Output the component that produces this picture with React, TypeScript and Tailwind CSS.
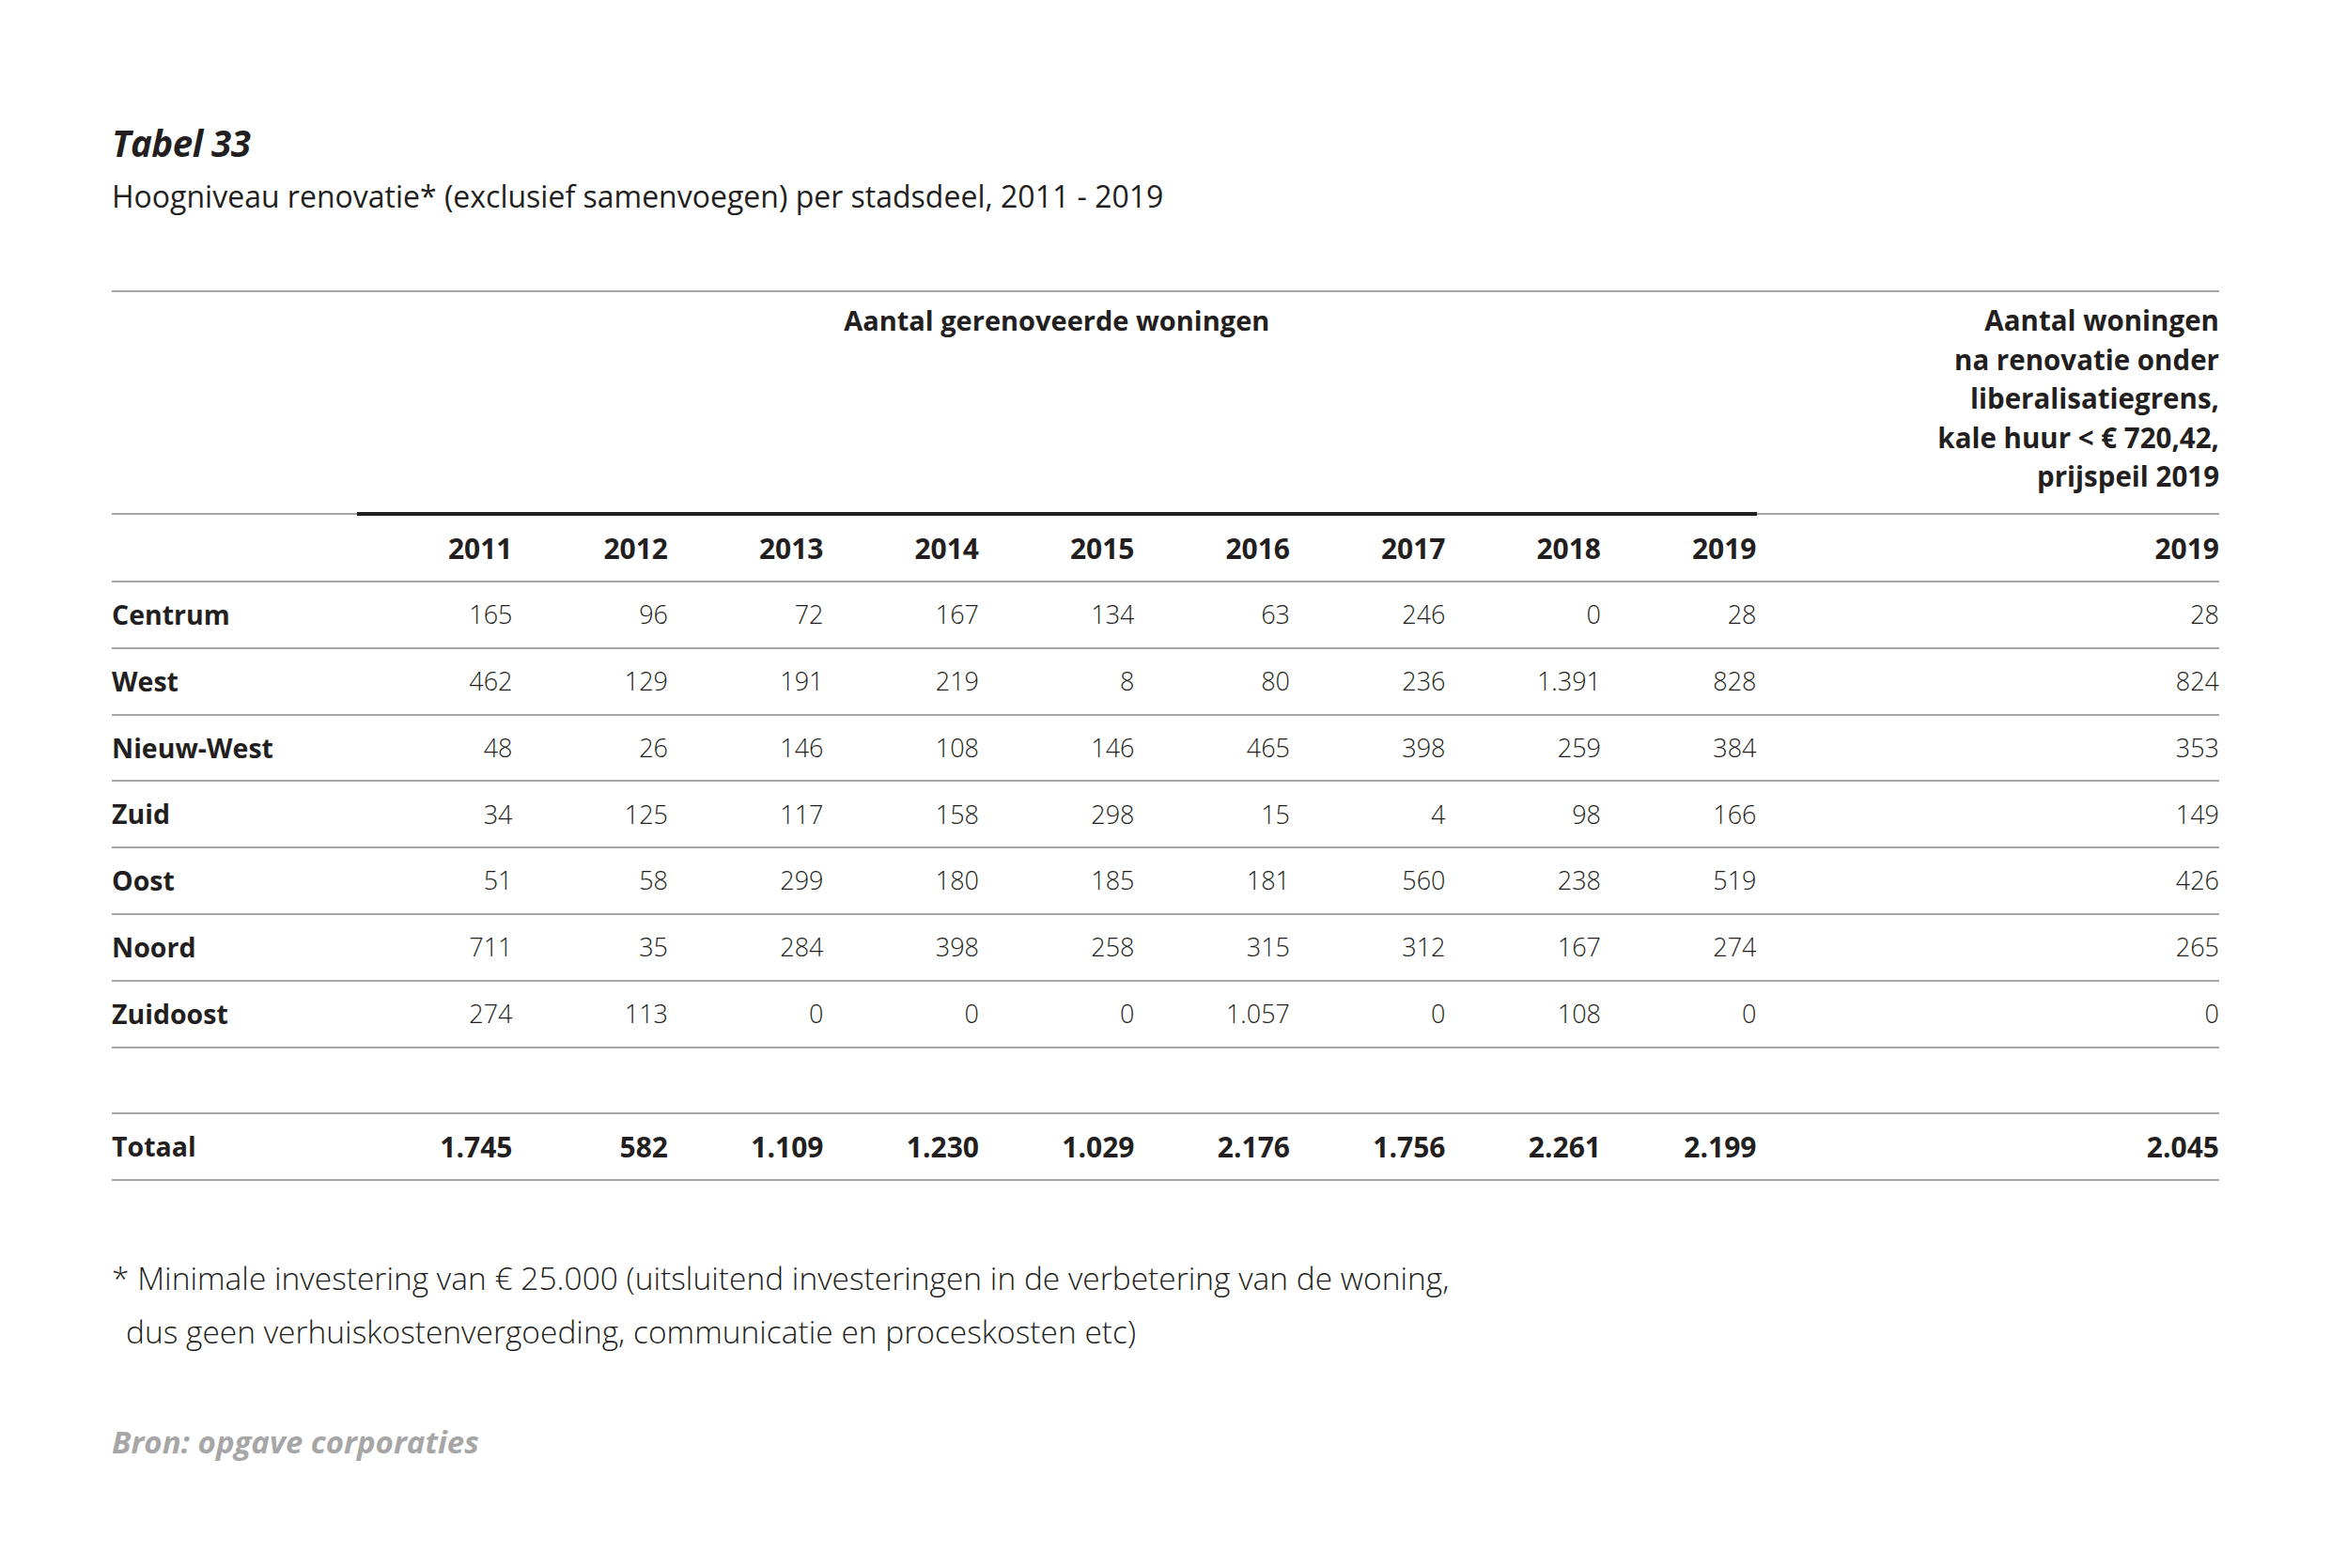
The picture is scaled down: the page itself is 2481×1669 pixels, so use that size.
/**
 * Tabel 33 — Hoogniveau renovatie per stadsdeel
 */

const JAREN = ["2011", "2012", "2013", "2014", "2015", "2016", "2017", "2018", "2019"];

interface Rij {
  naam: string;
  waarden: string[];
  onderGrens: string;
}

const RIJEN: Rij[] = [
  { naam: "Centrum", waarden: ["165", "96", "72", "167", "134", "63", "246", "0", "28"], onderGrens: "28" },
  { naam: "West", waarden: ["462", "129", "191", "219", "8", "80", "236", "1.391", "828"], onderGrens: "824" },
  { naam: "Nieuw-West", waarden: ["48", "26", "146", "108", "146", "465", "398", "259", "384"], onderGrens: "353" },
  { naam: "Zuid", waarden: ["34", "125", "117", "158", "298", "15", "4", "98", "166"], onderGrens: "149" },
  { naam: "Oost", waarden: ["51", "58", "299", "180", "185", "181", "560", "238", "519"], onderGrens: "426" },
  { naam: "Noord", waarden: ["711", "35", "284", "398", "258", "315", "312", "167", "274"], onderGrens: "265" },
  { naam: "Zuidoost", waarden: ["274", "113", "0", "0", "0", "1.057", "0", "108", "0"], onderGrens: "0" },
];

const TOTAAL: Rij = {
  naam: "Totaal",
  waarden: ["1.745", "582", "1.109", "1.230", "1.029", "2.176", "1.756", "2.261", "2.199"],
  onderGrens: "2.045",
};

const RASTER = "grid grid-cols-[261px_repeat(9,165.5px)_1fr]";

export default function App() {
  return (
    <div className="min-h-[1669px] w-full bg-white text-[#231f20] [font-family:'Open_Sans','Noto_Sans',sans-serif]">
      <div className="ml-[119px] w-[2243px] pt-[133px]">
        <h1 className="text-[38.5px] font-bold italic leading-[38px] tracking-[-0.5px]">Tabel 33</h1>
        <p className="mt-[22px] text-[32px] leading-[32px]">
          Hoogniveau renovatie* (exclusief samenvoegen) per stadsdeel, 2011 - 2019
        </p>

        {/* Tabel */}
        <div className="mt-[84px] text-[28.5px]">
          <div className={`${RASTER} h-[236px] border-t-2 border-[#a6a6a6]`}>
            <div />
            <div className="col-span-9 pt-[9px] text-center text-[29px] font-bold leading-[41.5px]">
              Aantal gerenoveerde woningen
            </div>
            <div className="pt-[9px] text-right text-[29.5px] font-bold leading-[41.5px]">
              Aantal woningen
              <br />
              na renovatie onder
              <br />
              liberalisatiegrens,
              <br />
              kale huur &lt; € 720,42,
              <br />
              prijspeil 2019
            </div>
          </div>

          <div className="flex h-[4px] items-center">
            <div className="h-[2px] w-[261px] bg-[#a6a6a6]" />
            <div className="h-[4px] w-[1489.5px] bg-[#231f20]" />
            <div className="h-[2px] flex-1 bg-[#a6a6a6]" />
          </div>

          <div className={`${RASTER} h-[71px] items-center border-b-2 border-[#a6a6a6] text-[30px] font-bold`}>
            <div />
            {JAREN.map((j) => (
              <div key={j} className="text-right">{j}</div>
            ))}
            <div className="text-right">2019</div>
          </div>

          {RIJEN.map((r) => (
            <div key={r.naam} className={`${RASTER} h-[70.8px] items-center border-b-2 border-[#a6a6a6]`}>
              <div className="font-bold">{r.naam}</div>
              {r.waarden.map((w, i) => (
                <div key={i} className="text-right text-[27px] font-light">{w}</div>
              ))}
              <div className="text-right text-[27px] font-light">{r.onderGrens}</div>
            </div>
          ))}

          <div className="h-[70.8px] border-b-2 border-[#a6a6a6]" />

          <div className={`${RASTER} h-[70.8px] items-center border-b-2 border-[#a6a6a6] font-bold`}>
            <div>{TOTAAL.naam}</div>
            {TOTAAL.waarden.map((w, i) => (
              <div key={i} className="text-right text-[30px]">{w}</div>
            ))}
            <div className="text-right text-[30px]">{TOTAAL.onderGrens}</div>
          </div>
        </div>

        {/* Voetnoot */}
        <div className="mt-[75px] text-[33.5px] font-light leading-[57px]">
          <div>* Minimale investering van € 25.000 (uitsluitend investeringen in de verbetering van de woning,</div>
          <div className="pl-[15px]">dus geen verhuiskostenvergoeding, communicatie en proceskosten etc)</div>
        </div>

        <p className="mt-[72px] text-[33px] font-bold italic leading-[33px] text-[#a6a6a6]">
          Bron: opgave corporaties
        </p>
      </div>
    </div>
  );
}
